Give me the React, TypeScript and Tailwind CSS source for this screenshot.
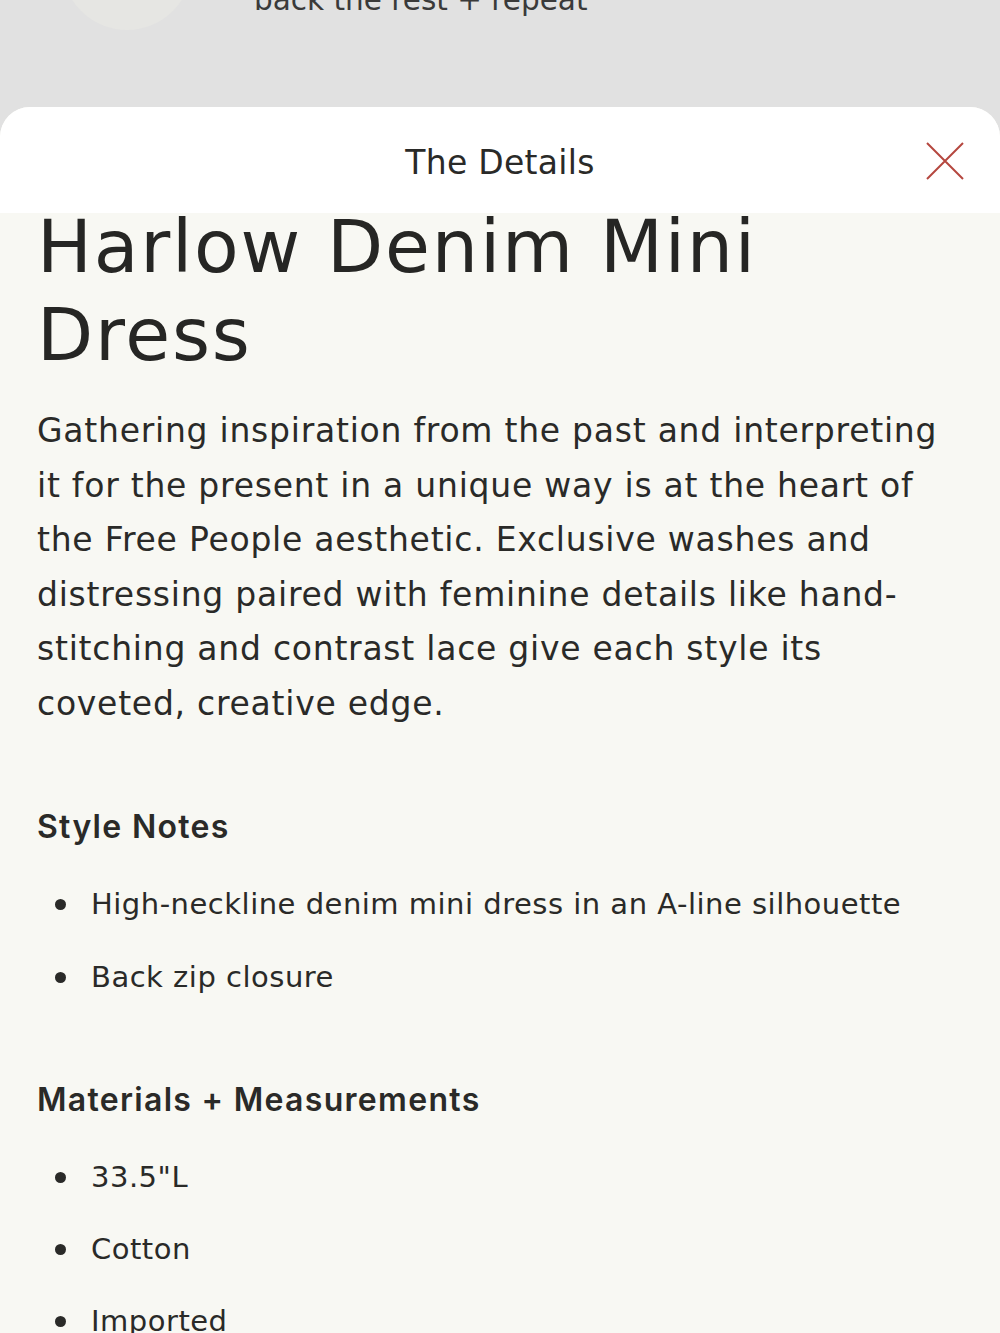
export default function App() {
  const styleNotes = ["High-neckline denim mini dress in an A-line silhouette", "Back zip closure"];
  const materials = ['33.5"L', "Cotton", "Imported"];

  return (
    <div className="relative h-[1333px] w-full overflow-hidden bg-[#e1e1e1] font-['DejaVu_Sans',sans-serif] text-[#2a2a28]">
      {/* page behind the sheet */}
      <div className="flex h-[107px] items-start">
        <div className="ml-[62px] mt-[-100px] h-[130px] w-[130px] rounded-full bg-[#e6e6e3]" />
        <div className="ml-[62px] mt-[-22px] text-[29.5px] text-[#3a3a3a]">back the rest + repeat</div>
      </div>

      {/* sheet */}
      <div className="flex h-[1226px] flex-col overflow-hidden rounded-t-[30px] bg-[#f8f8f3]">
        <div className="relative z-10 flex h-[106px] shrink-0 items-center justify-center bg-white">
          <span className="mt-[6px] text-[33px] tracking-[0.3px] text-[#2a2a28]">The Details</span>
          <button className="absolute right-[36px] top-[35px] h-[38px] w-[38px]">
            <svg viewBox="0 0 38 38" className="h-full w-full" fill="none" stroke="#b5473f" strokeWidth="2">
              <path d="M1 1L37 37M37 1L1 37" />
            </svg>
          </button>
        </div>

        <div className="px-[37px]">
          <h1 className="mt-[-10px] text-[73px] leading-[88px] tracking-[1.8px] text-[#262624]">
            Harlow Denim Mini
            <br />
            Dress
          </h1>
          <p className="mt-[25px] text-[33px] leading-[54.5px] tracking-[0.75px] text-[#2a2a28]">
            Gathering inspiration from the past and interpreting it for the present in a unique way is at the heart of
            the Free People aesthetic. Exclusive washes and distressing paired with feminine details like hand-stitching
            and contrast lace give each style its coveted, creative edge.
          </p>

          <h2 className="mt-[72px] font-['Inter',sans-serif] text-[32px] font-semibold tracking-[1.3px]">Style Notes</h2>
          <ul className="mt-[34px] flex flex-col gap-[34px]">
            {styleNotes.map((s) => (
              <li key={s} className="flex items-center text-[29px] leading-[39px] tracking-[0.5px]">
                <span className="ml-[18px] mr-[25px] h-[11px] w-[11px] rounded-full bg-[#2a2a28]" />
                {s}
              </li>
            ))}
          </ul>

          <h2 className="mt-[79px] font-['Inter',sans-serif] text-[32px] font-semibold tracking-[1.3px]">
            Materials + Measurements
          </h2>
          <ul className="mt-[34px] flex flex-col gap-[33px]">
            {materials.map((s) => (
              <li key={s} className="flex items-center text-[29px] leading-[39px] tracking-[0.5px]">
                <span className="ml-[18px] mr-[25px] h-[11px] w-[11px] rounded-full bg-[#2a2a28]" />
                {s}
              </li>
            ))}
          </ul>
        </div>
      </div>
    </div>
  );
}
